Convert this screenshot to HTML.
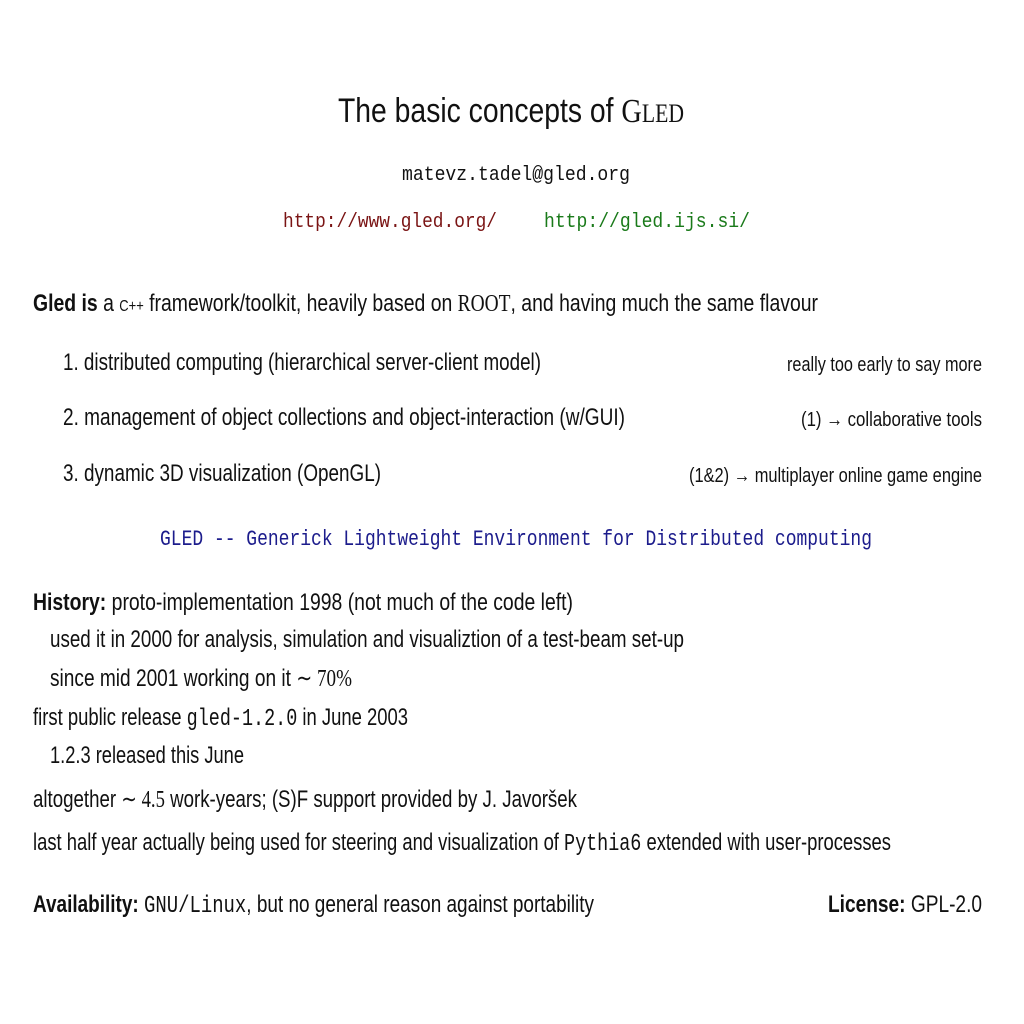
<!DOCTYPE html>
<html><head><meta charset="utf-8"><style>
html,body{margin:0;padding:0;background:#fff;}
body{width:1024px;height:1024px;position:relative;overflow:hidden;font-family:"Liberation Sans",sans-serif;color:#111;}
.l{position:absolute;white-space:nowrap;transform-origin:0 50%;line-height:1;}
.m{font-family:"Liberation Mono",monospace;}
.s{font-family:"Liberation Serif",serif;}
b{font-weight:bold;}
</style></head><body>
<div class="l" style="left:338px;top:94px;font-size:34px;">The basic concepts of <span class="s">G<span style="font-size:26px">LED</span></span></div>
<div class="l m" style="left:402px;top:166px;font-size:20px;">matevz.tadel@gled.org</div>
<div class="l m" style="left:283px;top:213px;font-size:20px;color:#7a1414;">http://www.gled.org/</div>
<div class="l m" style="left:544px;top:213px;font-size:20px;color:#1a7a1a;">http://gled.ijs.si/</div>
<div class="l" style="left:33px;top:292px;font-size:24px;"><b>Gled is</b> a <span style="font-size:16px">C++</span> framework/toolkit, heavily based on <span class="s">ROOT</span>, and having much the same flavour</div>
<div class="l" style="left:63px;top:351px;font-size:24px;">1. distributed computing (hierarchical server-client model)</div>
<div class="l" style="left:63px;top:406px;font-size:24px;">2. management of object collections and object-interaction (w/GUI)</div>
<div class="l" style="left:63px;top:462px;font-size:24px;">3. dynamic 3D visualization (OpenGL)</div>
<div class="l" style="left:787px;top:355px;font-size:20px;">really too early to say more</div>
<div class="l" style="left:801px;top:410px;font-size:20px;">(1) → collaborative tools</div>
<div class="l" style="left:689px;top:466px;font-size:20px;">(1&amp;2) → multiplayer online game engine</div>
<div class="l m" style="left:160px;top:529px;font-size:22px;color:#1c1c8c;">GLED -- Generick Lightweight Environment for Distributed computing</div>
<div class="l" style="left:33px;top:591px;font-size:24px;"><b>History:</b> proto-implementation 1998 (not much of the code left)</div>
<div class="l" style="left:50px;top:628px;font-size:24px;">used it in 2000 for analysis, simulation and visualiztion of a test-beam set-up</div>
<div class="l" style="left:50px;top:667px;font-size:24px;">since mid 2001 working on it <span class="s">∼ 70%</span></div>
<div class="l" style="left:33px;top:706px;font-size:24px;">first public release <span class="m">gled-1.2.0</span> in June 2003</div>
<div class="l" style="left:50px;top:744px;font-size:24px;">1.2.3 released this June</div>
<div class="l" style="left:33px;top:788px;font-size:24px;">altogether <span class="s">∼ 4.5</span> work-years; (S)F support provided by J. Javoršek</div>
<div class="l" style="left:33px;top:831px;font-size:24px;">last half year actually being used for steering and visualization of <span class="m">Pythia6</span> extended with user-processes</div>
<div class="l" style="left:33px;top:893px;font-size:24px;"><b>Availability:</b> <span class="m">GNU/Linux</span>, but no general reason against portability</div>
<div class="l" style="left:828px;top:893px;font-size:24px;"><b>License:</b> GPL-2.0</div>
<script>
var W=[346,228,214,206,785,478,562,318,195,181,293,712,540,634,302,375,194,544,858,561,154];
var els=document.querySelectorAll('.l');
for(var i=0;i<els.length;i++){var w=els[i].getBoundingClientRect().width;if(w>0)els[i].style.transform='scaleX('+(W[i]/w)+')';}
</script>
</body></html>
